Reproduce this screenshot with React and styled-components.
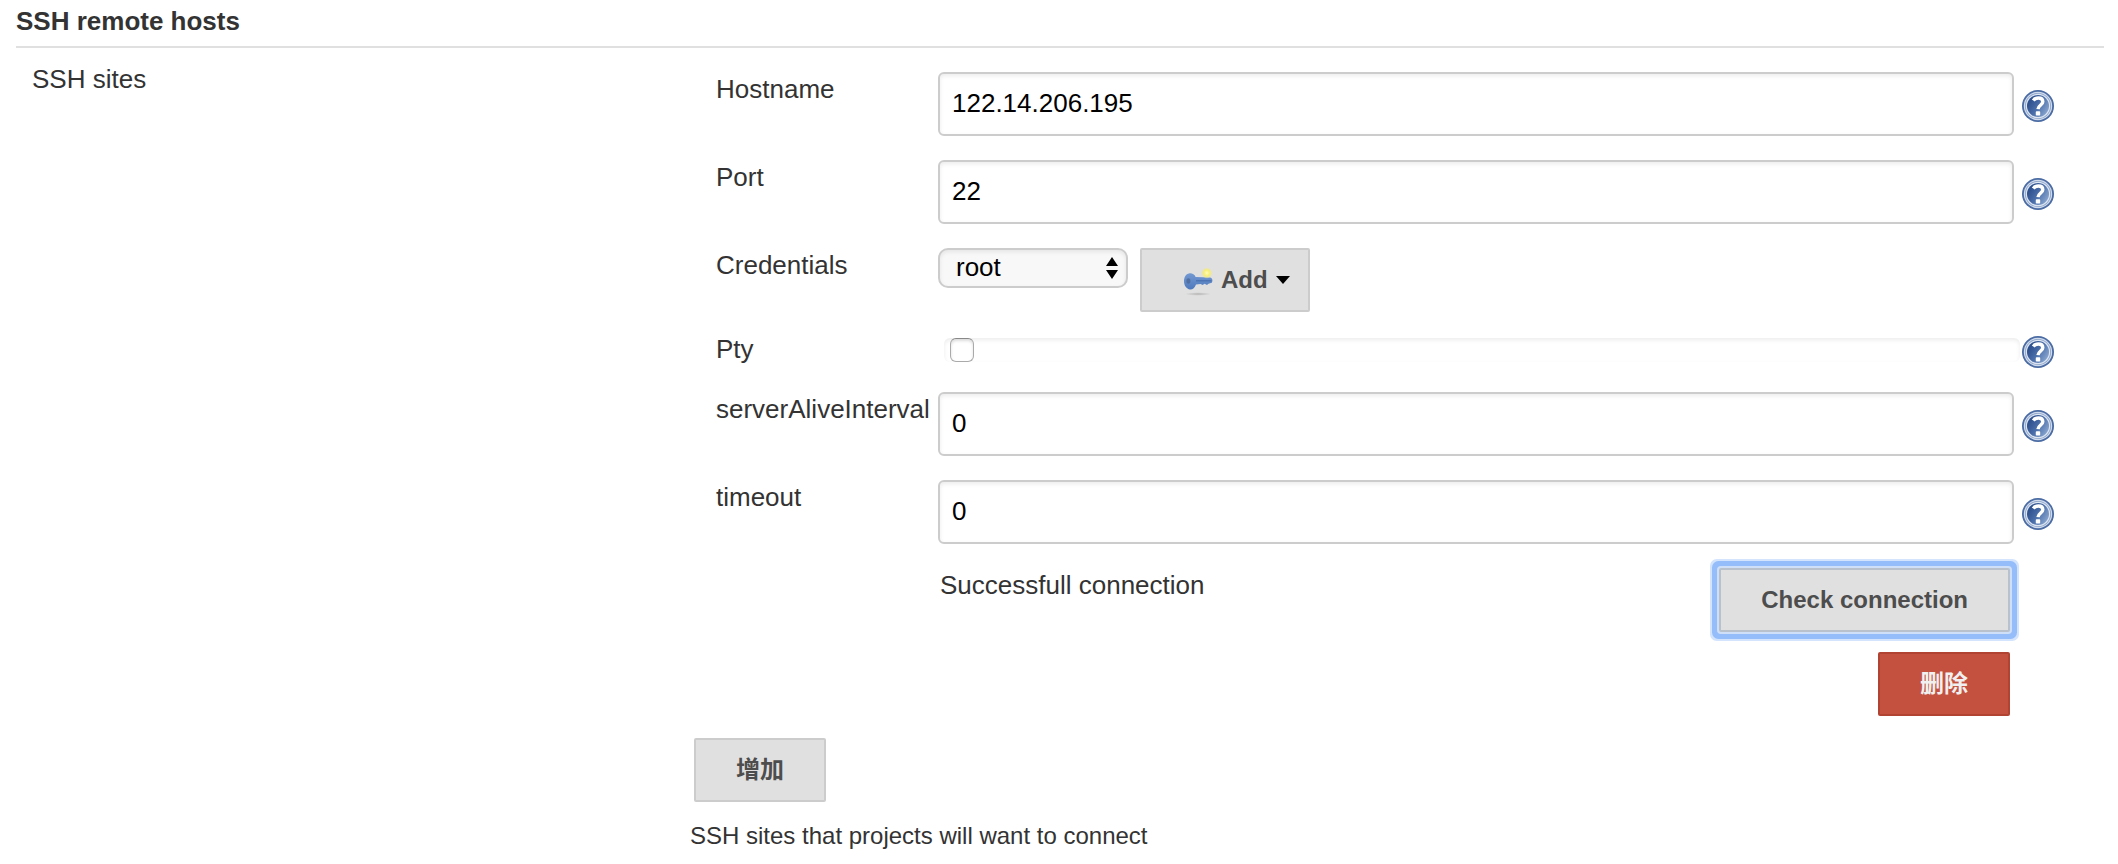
import { useState } from "react";
import styled, { createGlobalStyle } from "styled-components";

function HelpLink({ topic }) {
  return (
    <HelpAnchor href={`#help-${topic}`} aria-label={`Help for ${topic}`}>
      <svg width="32" height="32" viewBox="0 0 32 32" aria-hidden="true">
        <defs>
          <linearGradient id={`disc-${topic}`} x1="0" y1="0.2" x2="1" y2="0.8">
            <stop offset="0.1" stopColor="#2c4f8d" />
            <stop offset="0.5" stopColor="#4a6ea9" />
            <stop offset="1" stopColor="#8fabd3" />
          </linearGradient>
        </defs>
        <circle cx="16" cy="16" r="16" fill="#4a6ba3" />
        <circle cx="16" cy="16" r="14.2" fill="#cfdaeb" />
        <circle cx="16" cy="16" r="13" fill="#8ba3c9" />
        <circle cx="16" cy="16" r="12.2" fill="#dde5f1" />
        <circle cx="16" cy="16" r="11" fill={`url(#disc-${topic})`} />
        <path
          d="M11.2 10.4C12.4 8.7 14 8 16.4 8C19.3 8 20.8 9.4 20.8 11.7C20.8 14.9 16.4 15.1 16 19.2"
          fill="none"
          stroke="#fff"
          strokeWidth="3.4"
        />
        <rect x="13.8" y="21.2" width="4.4" height="4.4" rx="0.8" fill="#fff" />
      </svg>
    </HelpAnchor>
  );
}

function KeyIcon() {
  return (
    <svg width="32" height="32" viewBox="0 0 32 32" aria-hidden="true">
      <defs>
        <radialGradient id="key-shadow">
          <stop offset="0" stopColor="#b4b4b4" />
          <stop offset="1" stopColor="#e0e0e0" />
        </radialGradient>
        <radialGradient id="key-spark">
          <stop offset="0" stopColor="#fffbc0" />
          <stop offset="0.6" stopColor="#f8ee72" />
          <stop offset="1" stopColor="#f1e98c" stopOpacity="0.3" />
        </radialGradient>
        <linearGradient id="key-body" x1="0" y1="0" x2="0" y2="1">
          <stop offset="0" stopColor="#7399d2" />
          <stop offset="1" stopColor="#4f79bd" />
        </linearGradient>
      </defs>
      <ellipse cx="16" cy="30" rx="13" ry="1.8" fill="url(#key-shadow)" />
      <path
        d="M7 9.4C10 8.9 12.5 10.4 13.6 12.9L28 13.4C30.5 13.9 31 16.4 29.8 18.8L26.5 19.8L25 21L22.6 19.8L20.6 21L18.6 20L14 20.4C13 23.6 10.5 25.6 8 25.4C4.5 25 2 21.6 2 17.2C2 13 4 9.9 7 9.4Z"
        fill="url(#key-body)"
      />
      <path d="M14 16.8H29.5" stroke="#4a72b3" strokeWidth="1.4" />
      <ellipse cx="6.4" cy="17" rx="2" ry="2.8" fill="#52709f" />
      <circle cx="24.8" cy="9" r="5.2" fill="url(#key-spark)" />
    </svg>
  );
}

function TextRow({ name, defaultValue }) {
  return (
    <Row>
      <Label htmlFor={name}>{name}</Label>
      <TextInput id={name} type="text" defaultValue={defaultValue} />
      <HelpLink topic={name} />
    </Row>
  );
}

function App() {
  const [pty, setPty] = useState(false);

  return (
    <>
      <GlobalStyle />
      <Section>
        <SectionTitle>SSH remote hosts</SectionTitle>
        <SectionBody>
          <SettingName>SSH sites</SettingName>
          <Setting>
            <Site onSubmit={(e) => e.preventDefault()}>
              <TextRow name="Hostname" defaultValue="122.14.206.195" />
              <TextRow name="Port" defaultValue="22" />
              <Row>
                <Label htmlFor="credentials">Credentials</Label>
                <Credentials>
                  <SelectBox>
                    <Select id="credentials" defaultValue="root">
                      <option value="root">root</option>
                    </Select>
                    <SelectArrows width="12" height="22" viewBox="0 0 12 22" aria-hidden="true">
                      <path d="M6 0L12 9H0ZM0 13H12L6 22Z" />
                    </SelectArrows>
                  </SelectBox>
                  <AddButton type="button">
                    <KeyIcon />
                    <AddText>Add</AddText>
                    <svg width="14" height="8" viewBox="0 0 14 8" aria-hidden="true">
                      <path d="M0 0H14L7 8Z" />
                    </svg>
                  </AddButton>
                </Credentials>
              </Row>
              <CheckRow>
                <Label htmlFor="pty">Pty</Label>
                <CheckTrack>
                  <Checkbox
                    id="pty"
                    type="checkbox"
                    checked={pty}
                    onChange={(e) => setPty(e.target.checked)}
                  />
                </CheckTrack>
                <HelpLink topic="Pty" />
              </CheckRow>
              <TextRow name="serverAliveInterval" defaultValue="0" />
              <TextRow name="timeout" defaultValue="0" />
              <Row>
                <Result>
                  <Status>Successfull connection</Status>
                  <CheckButton type="button">Check connection</CheckButton>
                </Result>
              </Row>
            </Site>
            <DeleteLine>
              <DeleteButton type="button">删除</DeleteButton>
            </DeleteLine>
            <Button type="button">增加</Button>
            <Description>SSH sites that projects will want to connect</Description>
          </Setting>
        </SectionBody>
      </Section>
    </>
  );
}

export default App;

const GlobalStyle = createGlobalStyle`
  * {
    box-sizing: border-box;
  }

  body {
    margin: 0;
    background-color: #fff;
    color: #333;
    font-family: "Liberation Sans", "Noto Sans CJK SC", sans-serif;
    font-size: 26px;
    line-height: 30px;
  }

  button, input, select {
    margin: 0;
    font-family: inherit;
  }

  svg {
    display: block;
    flex: none;
  }
`;

const Section = styled.section`
  padding: 6px 14px 14px 16px;
`;

const SectionTitle = styled.h2`
  margin: 0;
  padding-bottom: 10px;
  border-bottom: 2px solid #e0e0e0;
  font-size: 26px;
  line-height: 30px;
`;

const SectionBody = styled.div`
  display: grid;
  grid-template-columns: 337fr 707fr;
`;

const SettingName = styled.div`
  padding: 16px 16px 0;
`;

const Setting = styled.div`
  min-width: 0;
  padding-top: 24px;
`;

const Site = styled.form`
  display: flex;
  flex-direction: column;
  gap: 24px;
  padding: 0 50px 0 26px;
`;

const HelpAnchor = styled.a`
  display: block;
  width: 32px;
  height: 32px;
  margin-top: 18px;
`;

const Label = styled.label`
  padding-top: 2px;
`;

const Row = styled.div`
  display: grid;
  grid-template-columns: 214px minmax(0, 1fr) 32px;
  column-gap: 8px;
  align-items: start;
`;

const CheckRow = styled(Row)`
  margin-top: -4px;

  ${HelpAnchor} {
    margin-top: 4px;
  }
`;

const TextInput = styled.input`
  width: 100%;
  height: 64px;
  padding: 0 12px 2px;
  border: 2px solid #ccc;
  border-radius: 6px;
  box-shadow: inset 0 2px 4px rgba(0, 0, 0, 0.08);
  background-color: #fff;
  color: #000;
  font-size: 26px;
`;

const Credentials = styled.div`
  display: flex;
  align-items: flex-start;
  gap: 12px;
`;

const SelectBox = styled.div`
  position: relative;
`;

const Select = styled.select`
  display: block;
  width: 190px;
  height: 40px;
  padding: 0 36px 2px 16px;
  appearance: none;
  border: 2px solid #ccc;
  border-radius: 10px;
  box-shadow: inset 0 2px 4px rgba(0, 0, 0, 0.08);
  background-color: #f8f8f8;
  color: #000;
  font-size: 26px;
`;

const SelectArrows = styled.svg`
  position: absolute;
  top: 9px;
  right: 10px;
  pointer-events: none;
`;

const Button = styled.button`
  height: 64px;
  margin: 0 4px;
  padding: 0 40px;
  border: 2px solid #ccc;
  border-radius: 2px;
  background-color: #e0e0e0;
  color: #4d4d4d;
  font-size: 24px;
  font-weight: bold;
  line-height: 28px;
  white-space: nowrap;
  cursor: pointer;
`;

const AddButton = styled(Button)`
  display: flex;
  align-items: center;
  margin: 0;
  padding-right: 18px;
`;

const AddText = styled.span`
  margin: 0 8px 0 7px;
`;

const CheckTrack = styled.div`
  height: 24px;
  margin: 6px -6px 0 6px;
  padding-left: 6px;
  border-radius: 6px;
  box-shadow: inset 0 2px 4px rgba(0, 0, 0, 0.08);
`;

const Checkbox = styled.input`
  display: block;
  width: 24px;
  height: 24px;
  appearance: none;
  border: 1px solid #aaa;
  border-top-color: #888;
  border-radius: 6px;
  box-shadow: inset 0 2px 3px rgba(0, 0, 0, 0.14);
  background-color: #fff;

  &:checked {
    background-color: #4a8df6;
  }
`;

const Result = styled.div`
  grid-column: 2;
  display: flex;
  align-items: flex-start;
  justify-content: space-between;
`;

const Status = styled.div`
  padding: 2px 2px 0;
`;

const CheckButton = styled(Button)`
  border-color: #b9c1cc;
  outline: none;
  box-shadow: 0 0 0 2px #cfdff8, 0 0 0 7px #94bdfa, 0 0 0 9px #d4e4fd;
`;

const DeleteLine = styled.div`
  display: flex;
  justify-content: flex-end;
  padding: 20px 90px 22px 0;
`;

const DeleteButton = styled(Button)`
  border-color: #b14332;
  background-color: #c4513f;
  color: #f0f0f0;
`;

const Description = styled.div`
  padding-top: 20px;
  font-size: 24px;
  line-height: 28px;
`;
